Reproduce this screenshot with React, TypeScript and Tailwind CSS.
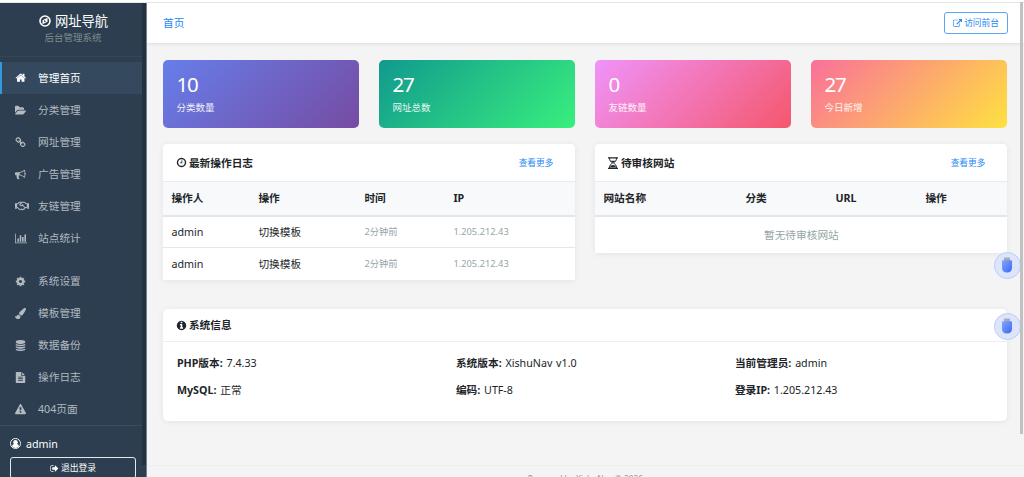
import type { ReactNode } from 'react';
import { FaPaintBrush, FaRegHandshake } from 'react-icons/fa';

const paths = {
  home: 'M1472 992v480q0 26-19 45t-45 19h-384v-384h-256v384h-384q-26 0-45-19t-19-45v-480q0-1 .5-3t.5-3l575-474 575 474q1 2 1 6zm223-69l-62 74q-8 9-21 11h-3q-13 0-21-7l-692-577-692 577q-12 8-24 7-13-2-21-11l-62-74q-8-10-7-23.500t11-21.500l719-599q32-26 76-26t76 26l244 204v-195q0-14 9-23t23-9h192q14 0 23 9t9 23v408l219 182q10 8 11 21.500t-7 23.500z',
  folder: 'M1815 952q0 31-31 66l-336 396q-43 51-120.500 86.500t-143.500 35.500h-1088q-34 0-60.500-13t-26.500-43q0-31 31-66l336-396q43-51 120.500-86.500t143.500-35.500h1088q34 0 60.500 13t26.500 43zm-343-344v160h-832q-94 0-197 47.500t-164 119.500l-337 396-5 6q0-4-.5-12.500t-.5-12.500v-960q0-92 66-158t158-66h320q92 0 158 66t66 158v32h544q92 0 158 66t66 158z',
  link: 'M1520 1216q0-40-28-68l-208-208q-28-28-68-28-42 0-72 32 3 3 19 18.500t21.500 21.500 15 19 13 25.500 3.500 27.500q0 40-28 68t-68 28q-15 0-27.500-3.500t-25.500-13-19-15-21.500-21.500-18.500-19q-33 31-33 73 0 40 28 68l206 207q27 27 68 27 40 0 68-26l147-146q28-28 28-67zm-703-705q0-40-28-68l-206-207q-28-28-68-28-39 0-68 27l-147 146q-28 28-28 67 0 40 28 68l208 208q27 27 68 27 42 0 72-31-3-3-19-18.500t-21.500-21.500-15-19-13-25.500-3.500-27.500q0-40 28-68t68-28q15 0 27.500 3.500t25.500 13 19 15 21.500 21.500 18.500 19q33-31 33-73zm895 705q0 120-85 203l-147 146q-83 83-203 83-121 0-204-85l-206-207q-83-83-83-203 0-123 88-209l-88-88q-86 88-208 88-120 0-204-84l-208-208q-84-84-84-204t85-203l147-146q83-83 203-83 121 0 204 85l206 207q83 83 83 203 0 123-88 209l88 88q86-88 208-88 120 0 204 84l208 208q84 84 84 204z',
  bullhorn: 'M1664 640q53 0 90.500 37.500t37.500 90.500-37.500 90.500-90.500 37.500v384q0 52-38 90t-90 38q-417-347-812-380-58 19-91 66t-31 100.500 40 92.500q-20 33-23 65.500t6 58 33.500 55 48 50 61.500 50.500q-29 58-111.500 83t-168.500 11.500-132-55.500q-7-23-29.500-87.500t-32-94.500-23-89-15-101 3.500-98.500 22-110.500h-122q-66 0-113-47t-47-113v-192q0-66 47-113t113-47h480q435 0 896-384 52 0 90 38t38 90v384zm-128 604v-954q-394 302-768 343v270q377 42 768 341z',
  chart: 'M640 896v512h-256v-512h256zm384-512v1024h-256v-1024h256zm1024 1152v128h-2048v-1536h128v1408h1920zm-640-896v768h-256v-768h256zm384-384v1152h-256v-1152h256z',
  cog: 'M1152 896q0-106-75-181t-181-75-181 75-75 181 75 181 181 75 181-75 75-181zm512-109v222q0 12-8 23t-20 13l-185 28q-19 54-39 91 35 50 107 138 10 12 10 25t-9 23q-27 37-99 108t-94 71q-12 0-26-9l-138-108q-44 23-91 38-16 136-29 186-7 28-36 28h-222q-14 0-24.500-8.500t-11.500-21.500l-28-184q-49-16-90-37l-141 107q-10 9-25 9-14 0-25-11-126-114-165-168-7-10-7-23 0-12 8-23 15-21 51-66.500t54-70.500q-27-50-41-99l-183-27q-13-2-21-12.500t-8-23.500v-222q0-12 8-23t19-13l186-28q14-46 39-92-40-57-107-138-10-12-10-24 0-10 9-23 26-36 98.500-107.500t94.500-71.500q13 0 26 10l138 107q44-23 91-38 16-136 29-186 7-28 36-28h222q14 0 24.500 8.500t11.500 21.500l28 184q49 16 90 37l142-107q9-9 24-9 13 0 25 10 129 119 165 170 7 8 7 22 0 12-8 23-15 21-51 66.500t-54 70.500q26 50 41 98l183 28q13 2 21 12.500t8 23.500z',
  database: 'M896 768q237 0 443-43t325-127v170q0 69-103 128t-280 93.500-385 34.500-385-34.500-280-93.500-103-128v-170q119 84 325 127t443 43zm0 768q237 0 443-43t325-127v170q0 69-103 128t-280 93.500-385 34.500-385-34.500-280-93.500-103-128v-170q119 84 325 127t443 43zm0-384q237 0 443-43t325-127v170q0 69-103 128t-280 93.500-385 34.500-385-34.500-280-93.500-103-128v-170q119 84 325 127t443 43zm0-1152q208 0 385 34.500t280 93.500 103 128v128q0 69-103 128t-280 93.500-385 34.500-385-34.500-280-93.500-103-128v-128q0-69 103-128t280-93.500 385-34.500z',
  file: 'M1596 476q14 14 28 36h-472v-472q22 14 36 28zm-476 164h544v1056q0 40-28 68t-68 28h-1344q-40 0-68-28t-28-68v-1600q0-40 28-68t68-28h800v544q0 40 28 68t68 28zm160 736v-64q0-14-9-23t-23-9h-704q-14 0-23 9t-9 23v64q0 14 9 23t23 9h704q14 0 23-9t9-23zm0-256v-64q0-14-9-23t-23-9h-704q-14 0-23 9t-9 23v64q0 14 9 23t23 9h704q14 0 23-9t9-23zm0-256v-64q0-14-9-23t-23-9h-704q-14 0-23 9t-9 23v64q0 14 9 23t23 9h704q14 0 23-9t9-23z',
  warning: 'M1024 1375v-190q0-14-9.500-23.500t-22.500-9.500h-192q-13 0-22.500 9.500t-9.500 23.500v190q0 14 9.500 23.500t22.500 9.500h192q13 0 22.500-9.500t9.500-23.500zm-2-374l18-459q0-12-10-19-13-11-24-11h-220q-11 0-24 11-10 7-10 21l17 457q0 10 10 16.500t24 6.500h185q14 0 23.500-6.500t10.500-16.500zm-14-934l768 1408q35 63-2 126-17 29-46.500 46t-63.500 17h-1536q-34 0-63.500-17t-46.500-46q-37-63-2-126l768-1408q17-31 47-49t65-18 65 18 47 49z',
  clock: 'M1024 544v448q0 14-9 23t-23 9h-320q-14 0-23-9t-9-23v-64q0-14 9-23t23-9h224v-352q0-14 9-23t23-9h64q14 0 23 9t9 23zm416 352q0-148-73-273t-198-198-273-73-273 73-198 198-73 273 73 273 198 198 273 73 273-73 198-198 73-273zm224 0q0 209-103 385.500t-279.500 279.500-385.500 103-385.500-103-279.500-279.500-103-385.500 103-385.500 279.500-279.500 385.500-103 385.500 103 279.500 279.500 103 385.500z',
  info: 'M1152 1376v-160q0-14-9-23t-23-9h-96v-512q0-14-9-23t-23-9h-320q-14 0-23 9t-9 23v160q0 14 9 23t23 9h96v320h-96q-14 0-23 9t-9 23v160q0 14 9 23t23 9h448q14 0 23-9t9-23zm-128-896v-160q0-14-9-23t-23-9h-192q-14 0-23 9t-9 23v160q0 14 9 23t23 9h192q14 0 23-9t9-23zm640 416q0 209-103 385.500t-279.500 279.500-385.500 103-385.500-103-279.500-279.500-103-385.500 103-385.500 279.500-279.500 385.500-103 385.500 103 279.500 279.500 103 385.500z',
  external: 'M1408 928v320q0 119-84.500 203.500t-203.500 84.500h-832q-119 0-203.500-84.500t-84.500-203.500v-832q0-119 84.500-203.500t203.500-84.500h704q14 0 23 9t9 23v64q0 14-9 23t-23 9h-704q-66 0-113 47t-47 113v832q0 66 47 113t113 47h832q66 0 113-47t47-113v-320q0-14 9-23t23-9h64q14 0 23 9t9 23zm384-864v512q0 26-19 45t-45 19-45-19l-176-176-652 652q-10 10-23 10t-23-10l-114-114q-10-10-10-23t10-23l652-652-176-176q-19-19-19-45t19-45 45-19h512q26 0 45 19t19 45z',
  signOut: 'M704 1440q0 4 1 20t.5 26.500-3 23.500-10 19.500-20.500 6.500h-320q-119 0-203.500-84.500t-84.500-203.500v-704q0-119 84.500-203.500t203.500-84.500h320q13 0 22.500 9.500t9.500 22.500q0 4 1 20t.5 26.500-3 23.500-10 19.500-20.500 6.500h-320q-66 0-113 47t-47 113v704q0 66 47 113t113 47h312l11.500 1 11.500 3 8 5.500 7 9 2 13.500zm928-544q0 26-19 45l-544 544q-19 19-45 19t-45-19-19-45v-288h-448q-26 0-45-19t-19-45v-384q0-26 19-45t45-19h448v-288q0-26 19-45t45-19 45 19l544 544q19 19 19 45z',
};

function Icon({ name, className }: { name: keyof typeof paths; className?: string }) {
  return (
    <svg
      viewBox={name === 'chart' ? '0 0 2048 1792' : '0 0 1792 1792'}
      fill="currentColor"
      className={className ?? 'h-[11px] w-auto'}
    >
      <path d={paths[name]} />
    </svg>
  );
}

const mainMenu = [
  { icon: <Icon name="home" className="size-[11.500px]" />, label: '管理首页', active: true },
  { icon: <Icon name="folder" />, label: '分类管理' },
  { icon: <Icon name="link" />, label: '网址管理' },
  { icon: <Icon name="bullhorn" />, label: '广告管理' },
  { icon: <FaRegHandshake className="h-[12px] w-[14px]" />, label: '友链管理' },
  { icon: <Icon name="chart" />, label: '站点统计' },
];

const systemMenu = [
  { icon: <Icon name="cog" />, label: '系统设置' },
  { icon: <FaPaintBrush className="size-[11px]" />, label: '模板管理' },
  { icon: <Icon name="database" />, label: '数据备份' },
  { icon: <Icon name="file" />, label: '操作日志' },
  { icon: <Icon name="warning" />, label: '404页面' },
];

const stats = [
  { value: '10', label: '分类数量', bg: 'bg-[linear-gradient(135deg,#667eea,#764ba2)]' },
  { value: '27', label: '网址总数', bg: 'bg-[linear-gradient(135deg,#11998e,#38ef7d)]' },
  { value: '0', label: '友链数量', bg: 'bg-[linear-gradient(135deg,#f093fb,#f5576c)]' },
  { value: '27', label: '今日新增', bg: 'bg-[linear-gradient(135deg,#fa709a,#fee140)]' },
];

const logs = [
  { user: 'admin', action: '切换模板', time: '2分钟前', ip: '1.205.212.43' },
  { user: 'admin', action: '切换模板', time: '2分钟前', ip: '1.205.212.43' },
];

const systemInfo = [
  { label: 'PHP版本:', value: '7.4.33' },
  { label: '系统版本:', value: 'XishuNav v1.0' },
  { label: '当前管理员:', value: 'admin' },
  { label: 'MySQL:', value: '正常' },
  { label: '编码:', value: 'UTF-8' },
  { label: '登录IP:', value: '1.205.212.43' },
];

type MenuEntry = { icon: ReactNode; label: string; active?: boolean };

function MenuItem({ icon, label, active }: MenuEntry) {
  return (
    <a
      className={
        active
          ? 'flex h-8 items-center border-l-2 border-[#3498db] bg-[#34495e] pl-[12.500px] text-white'
          : 'flex h-8 items-center border-l-2 border-transparent pl-[12.500px] text-[#b3bac0]'
      }
    >
      <span className="flex w-[23.500px] items-center">{icon}</span>
      <span>{label}</span>
    </a>
  );
}

function Sidebar() {
  return (
    <aside className="relative flex w-[147px] shrink-0 flex-col border-r border-[#75808b] bg-[#2c3e50]">
      <div className="flex h-[54px] shrink-0 flex-col items-center border-b border-[#34465a] pt-[9px]">
        <div className="flex items-center gap-[4px] pl-px text-[13.300px] leading-[18px] text-white">
          <svg viewBox="0 0 24 24" className="size-[12px]" fill="none">
            <circle cx="12" cy="12" r="10" stroke="currentColor" strokeWidth="3.2" />
            <path d="M17 5.500v7.800l-10 5.200v-7.800z" fill="currentColor" />
            <path d="M10.300 10.200l4 2.200-4 2.200z" fill="#2c3e50" />
          </svg>
          网址导航
        </div>
        <div className="text-[9.500px] leading-[15px] text-[#7f8c8d]">后台管理系统</div>
      </div>
      <nav className="shrink-0 pt-[5px]">
        {mainMenu.map((item) => (
          <MenuItem key={item.label} {...item} />
        ))}
        <div className="h-[11px]" />
        {systemMenu.map((item) => (
          <MenuItem key={item.label} {...item} />
        ))}
      </nav>
      <div className="shrink-0 border-t border-[#3b4c5d] px-[10px] pt-[9px]">
        <div className="flex h-[17px] items-center gap-[5px] text-white">
          <svg viewBox="0 0 24 24" className="size-[11px]" fill="none">
            <circle cx="12" cy="12" r="11" stroke="currentColor" strokeWidth="2" />
            <circle cx="12" cy="9.500" r="5" fill="currentColor" />
            <path d="M4 18q2-5 5-5h6q3 0 5 5-3.500 4-8 4t-8-4z" fill="currentColor" />
          </svg>
          admin
        </div>
        <a className="mt-[5px] flex h-[22px] w-[126px] items-center justify-center gap-[2px] rounded-[3px] border border-[#e5e8ea] text-[8.800px] text-white">
          <Icon name="signOut" className="size-[9px]" />
          退出登录
        </a>
      </div>
      <div className="absolute right-0 top-0 h-[462px] w-[4px] bg-[#233241]" />
    </aside>
  );
}

function PanelHeader({ icon, title, more }: { icon: ReactNode; title: string; more?: boolean }) {
  return (
    <div className={more ? 'flex h-[37px] items-center pl-[12.500px] pr-[22px]' : 'flex h-[33px] items-center border-b border-[#eeeeee] px-[12.500px]'}>
      <h2 className="flex items-center gap-[2px] font-bold">
        {icon}
        {title}
      </h2>
      {more && <a className="ml-auto text-[8.700px] text-[#1e88f5]">查看更多</a>}
    </div>
  );
}

// small floating usb buttons on the right edge
function UsbButton() {
  return (
    <div className="flex size-[27px] items-center justify-center rounded-full border-[1.500px] border-[#bccafa] bg-[#dce5fc]">
      <svg viewBox="0 0 12 16" className="h-[16px] w-[12px]">
        <defs>
          <linearGradient id="usb" x1="0" y1="0" x2="1" y2="1">
            <stop offset="0" stopColor="#83a5fb" />
            <stop offset="1" stopColor="#3c68f7" />
          </linearGradient>
        </defs>
        <path d="M3 .5h6v4H3z" fill="#a9acb4" />
        <path d="M1 4q0-.7.7-.7h8.600q.7 0 .7.7v6.500q0 5-5 5t-5-5z" fill="url(#usb)" />
      </svg>
    </div>
  );
}

export default function App() {
  return (
    <div className="relative flex h-[477px] w-[1024px] flex-col overflow-hidden bg-white font-['Noto_Sans','Noto_Sans_CJK_SC',sans-serif] text-[10.700px] leading-[16px] text-[#212529]">
      <div className="h-[3px] shrink-0 border-b border-[#e8e8e8]" />
      <div className="flex min-h-0 flex-1">
        <Sidebar />
        <main className="flex min-w-0 flex-1 flex-col bg-[#f4f4f4]">
          <header className="flex h-[40px] shrink-0 items-center justify-between bg-white pl-4 pr-[16px] shadow-[0_1px_3px_rgba(0,0,0,0.1)]">
            <a className="text-[#1e88f5]">首页</a>
            <a className="flex h-[22px] w-[64px] items-center justify-center gap-[2px] rounded-[3px] border border-[#57a5f7] text-[8.700px] text-[#1e88f5]">
              <Icon name="external" className="size-[9px]" />
              访问前台
            </a>
          </header>

          <div className="flex flex-col pl-[16.400px] pr-[16.600px] pt-[17px]">
            <div className="grid grid-cols-4 gap-[20px]">
              {stats.map((stat) => (
                <div key={stat.label} className={`h-[68px] rounded-[5px] px-[13px] pt-[12px] text-white ${stat.bg}`}>
                  <div className="text-[20.500px] leading-[25px] tracking-[-1px]">{stat.value}</div>
                  <div className="mt-[3px] text-[9.500px] leading-[15px] opacity-90">{stat.label}</div>
                </div>
              ))}
            </div>

            <div className="mt-[16px] grid h-[165px] grid-cols-2 items-start gap-[20px]">
              <section className="rounded-t-[4px] bg-white shadow-[0_1px_6px_rgba(0,0,0,0.07)]">
                <PanelHeader icon={<Icon name="clock" />} title="最新操作日志" more />
                <table className="w-full table-fixed text-left">
                  <thead className="bg-[#f8f9fa]">
                    <tr className="h-[34px] border-b-2 border-t border-b-[#e3e6e9] border-t-[#e9ebed]">
                      <th className="w-[87px] pl-2">操作人</th>
                      <th className="w-[106px] pl-2">操作</th>
                      <th className="w-[89px] pl-2">时间</th>
                      <th className="pl-2">IP</th>
                    </tr>
                  </thead>
                  <tbody>
                    {logs.map((log, index) => (
                      <tr key={index} className="h-[32.400px] border-t border-[#e5e7ea]">
                        <td className="pl-2">{log.user}</td>
                        <td className="pl-2">{log.action}</td>
                        <td className="pl-2 text-[9.300px] text-[#95a5a6]">{log.time}</td>
                        <td className="pl-2 text-[9.300px] text-[#95a5a6]">{log.ip}</td>
                      </tr>
                    ))}
                  </tbody>
                </table>
              </section>

              <section className="rounded-t-[4px] bg-white shadow-[0_1px_6px_rgba(0,0,0,0.07)]">
                <PanelHeader
                  icon={
                    <svg viewBox="0 0 20 24" className="mx-[0.500px] h-[12px] w-[10px]" fill="none" stroke="currentColor" strokeWidth="2">
                      <path d="M0 1.500h20M0 22.500h20" strokeWidth="2.500" />
                      <path d="M3 2c0 6 3 8 6 10-3 2-6 4-6 10M17 2c0 6-3 8-6 10 3 2 6 4 6 10" />
                      <path d="M5 7.500h10l-5 4.500zM4 21c0-3 3-5 6-5s6 2 6 5z" fill="currentColor" stroke="none" />
                    </svg>
                  }
                  title="待审核网站"
                  more
                />
                <table className="w-full table-fixed text-left">
                  <thead className="bg-[#f8f9fa]">
                    <tr className="h-[34px] border-b-2 border-t border-b-[#e3e6e9] border-t-[#e9ebed]">
                      <th className="w-[142px] pl-2">网站名称</th>
                      <th className="w-[90px] pl-2">分类</th>
                      <th className="w-[90px] pl-2">URL</th>
                      <th className="pl-2">操作</th>
                    </tr>
                  </thead>
                  <tbody>
                    <tr className="h-[37px]">
                      <td colSpan={4} className="text-center text-[#95a5a6]">暂无待审核网站</td>
                    </tr>
                  </tbody>
                </table>
              </section>
            </div>

            <section className="h-[112px] rounded-[5px] bg-white shadow-[0_1px_6px_rgba(0,0,0,0.07)]">
              <PanelHeader icon={<Icon name="info" />} title="系统信息" />
              <div className="grid grid-cols-[279px_279px_1fr] gap-y-[11px] pl-[13.500px] pt-[13px] [word-spacing:1px]">
                {systemInfo.map((item) => (
                  <div key={item.label}>
                    <strong>{item.label}</strong> {item.value}
                  </div>
                ))}
              </div>
            </section>
          </div>

          <footer className="mt-[44px] shrink-0 border-t border-[#eeeeee] pt-[6px] text-center text-[8.400px] leading-[13px] text-[#999999]">
            Powered by XishuNav © 2026
          </footer>
        </main>
      </div>

      <div className="absolute left-[993.500px] top-[251.500px] flex flex-col gap-[34px]">
        <UsbButton />
        <UsbButton />
      </div>
      <div className="absolute right-[1px] top-[2px] h-[432px] w-[3px] bg-[#c1c1c1]" />
    </div>
  );
}
